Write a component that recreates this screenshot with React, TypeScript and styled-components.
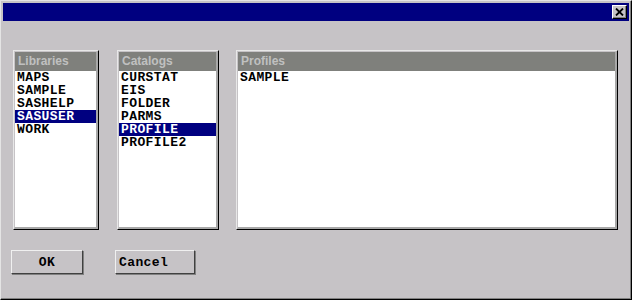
import React from "react";
import styled, { createGlobalStyle } from "styled-components";

const GlobalStyle = createGlobalStyle`
  html, body {
    margin: 0;
    padding: 0;
    background: #c6c3c6;
  }
`;

const Window = styled.div`
  box-sizing: border-box;
  width: 632px;
  height: 300px;
  display: flex;
  flex-direction: column;
  background: #c6c3c6;
  border-top: 1px solid #e4e4e4;
  border-left: 1px solid #e4e4e4;
  border-right: 1px solid #000;
  border-bottom: 1px solid #000;
  box-shadow: inset -1px -1px 0 #808080;
  padding: 2px;
`;

const TitleBar = styled.div`
  height: 18px;
  background: #000080;
  display: flex;
  align-items: center;
  justify-content: flex-end;
  padding-right: 2px;
`;

const CloseButton = styled.button`
  box-sizing: border-box;
  width: 15px;
  height: 14px;
  padding: 0;
  margin: 0;
  background: #c6c3c6;
  border-top: 1px solid #fff;
  border-left: 1px solid #fff;
  border-right: 1px solid #000;
  border-bottom: 1px solid #000;
  box-shadow: inset -1px -1px 0 #808080;
  display: flex;
  align-items: center;
  justify-content: center;
`;

const Body = styled.div`
  flex: 1;
  display: flex;
  flex-direction: column;
  padding-top: 29px;
`;

const PanelRow = styled.div`
  display: flex;
  padding-left: 10px;
  height: 180px;
`;

const Panel = styled.div<{ $width: number; $gap: number }>`
  box-sizing: border-box;
  width: ${(p) => p.$width}px;
  margin-right: ${(p) => p.$gap}px;
  height: 100%;
  border-top: 1px solid #e8e8e8;
  border-left: 1px solid #e8e8e8;
  border-right: 1px solid #000;
  border-bottom: 1px solid #000;
  display: flex;
`;

const PanelInner = styled.div`
  flex: 1;
  display: flex;
  flex-direction: column;
  border-top: 1px solid #c6c3c6;
  border-left: 1px solid #c6c3c6;
  border-right: 2px solid #a8a8a8;
  border-bottom: 2px solid #a8a8a8;
  background: #fff;
`;

const PanelHeader = styled.div`
  height: 19px;
  line-height: 19px;
  background: #7f807c;
  color: #c0c0c0;
  font-family: "Liberation Sans", Arial, sans-serif;
  font-weight: bold;
  font-size: 12px;
  padding-left: 3px;
`;

const List = styled.ul`
  list-style: none;
  margin: 0;
  padding: 0;
`;

const Item = styled.li<{ $selected?: boolean }>`
  height: 13px;
  line-height: 13px;
  padding-left: 2px;
  font-family: "Liberation Mono", "Courier New", monospace;
  font-weight: bold;
  font-size: 13px;
  letter-spacing: 0.4px;
  white-space: pre;
  overflow: hidden;
  background: ${(p) => (p.$selected ? "#000080" : "transparent")};
  color: ${(p) => (p.$selected ? "#fff" : "#000")};
`;

const ButtonRow = styled.div`
  display: flex;
  padding-left: 8px;
  margin-top: 20px;
`;

const Button = styled.button<{ $width: number; $gap: number; $align: "center" | "left" }>`
  box-sizing: border-box;
  width: ${(p) => p.$width}px;
  height: 24px;
  margin: 0 ${(p) => p.$gap}px 0 0;
  padding: 0 0 0 ${(p) => (p.$align === "left" ? 3 : 0)}px;
  text-align: ${(p) => p.$align};
  background: #c6c3c6;
  border-top: 1px solid #f0f0f0;
  border-left: 1px solid #f0f0f0;
  border-right: 1px solid #404040;
  border-bottom: 1px solid #404040;
  box-shadow: 1px 1px 0 #808080;
  font-family: "Liberation Mono", "Courier New", monospace;
  font-weight: bold;
  font-size: 13px;
  letter-spacing: 0.4px;
  color: #000;
`;

const panels = [
  {
    title: "Libraries",
    width: 86,
    gap: 18,
    items: ["MAPS", "SAMPLE", "SASHELP", "SASUSER", "WORK"],
    selected: "SASUSER",
  },
  {
    title: "Catalogs",
    width: 102,
    gap: 17,
    items: ["CURSTAT", "EIS", "FOLDER", "PARMS", "PROFILE", "PROFILE2"],
    selected: "PROFILE",
  },
  {
    title: "Profiles",
    width: 382,
    gap: 0,
    items: ["SAMPLE"],
    selected: "",
  },
];

export default function App() {
  return (
    <>
      <GlobalStyle />
      <Window>
        <TitleBar>
          <CloseButton aria-label="Close">
            <svg width="9" height="8" viewBox="0 0 9 8">
              <path d="M1 0.5 L8 7.5 M8 0.5 L1 7.5" stroke="#000" strokeWidth="1.8" />
            </svg>
          </CloseButton>
        </TitleBar>
        <Body>
          <PanelRow>
            {panels.map((p) => (
              <Panel key={p.title} $width={p.width} $gap={p.gap}>
                <PanelInner>
                  <PanelHeader>{p.title}</PanelHeader>
                  <List>
                    {p.items.map((it) => (
                      <Item key={it} $selected={it === p.selected}>
                        {it}
                      </Item>
                    ))}
                  </List>
                </PanelInner>
              </Panel>
            ))}
          </PanelRow>
          <ButtonRow>
            <Button $width={72} $gap={32} $align="center">OK</Button>
            <Button $width={80} $gap={0} $align="left">Cancel</Button>
          </ButtonRow>
        </Body>
      </Window>
    </>
  );
}
